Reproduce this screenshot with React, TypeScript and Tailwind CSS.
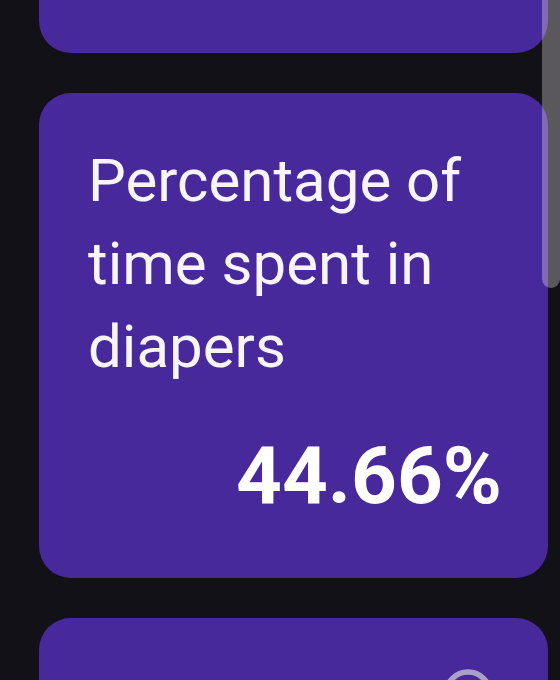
import React from "react";

const stats = {
  title: "Percentage of time spent in diapers",
  value: "44.66%",
};

function Ring() {
  return (
    <svg width="56" height="56" viewBox="0 0 56 56" className="block">
      <circle cx="28" cy="28" r="22" fill="none" stroke="#a9a2c6" strokeWidth="5.5" />
    </svg>
  );
}

export default function App() {
  return (
    <div className="relative h-[680px] w-[560px] overflow-hidden bg-[#131118] font-['Roboto',sans-serif]">
      <div className="flex flex-col gap-[40px] pl-[39px] pr-[12px]">
        {/* previous card, mostly scrolled out of view */}
        <div className="-mt-[80px] h-[133px] rounded-[32px] bg-[#48299b]" />

        <div className="flex h-[485px] flex-col rounded-[32px] bg-[#48299b] pl-[49px] pr-[46px] pt-[46px]">
          <p className="text-[60px] leading-[83px] text-[#f7f5fb]">{stats.title}</p>
          <p className="mt-[41px] text-right text-[80px] font-bold leading-[94px] text-white">
            {stats.value}
          </p>
        </div>

        {/* next card, only its top is visible */}
        <div className="flex h-[140px] justify-end rounded-t-[32px] bg-[#48299b] pr-[52px] pt-[48px]">
          <Ring />
        </div>
      </div>

      <div className="absolute right-0 top-0 h-[288px] w-[18px] rounded-b-full bg-white/30" />
    </div>
  );
}
